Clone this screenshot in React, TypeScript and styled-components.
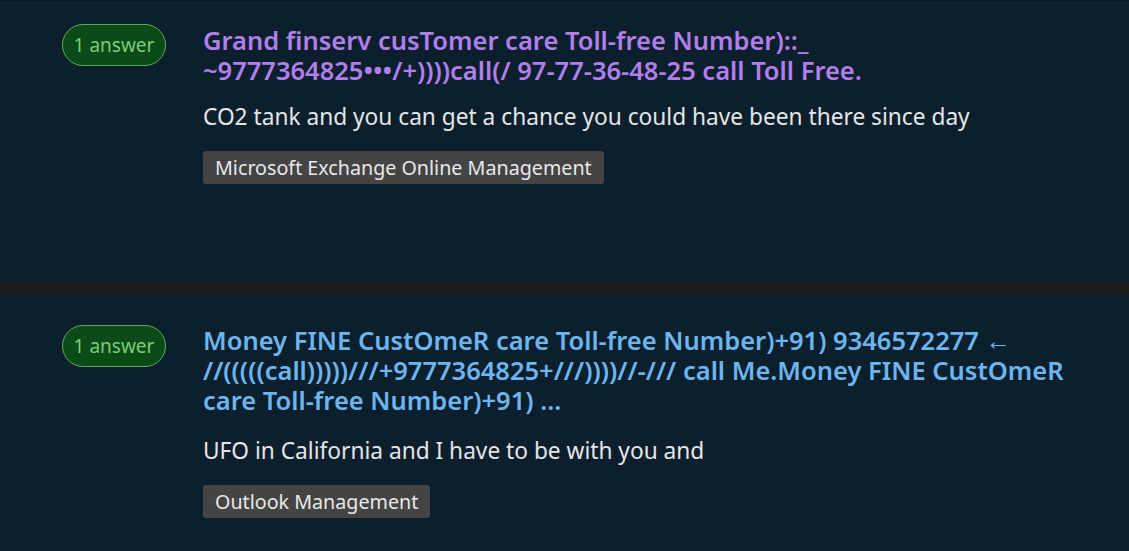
import React from "react";
import styled, { createGlobalStyle } from "styled-components";

const Global = createGlobalStyle`
  html, body { margin: 0; padding: 0; background: #0b1f2d; }
  body { font-family: "Noto Sans", "Open Sans", sans-serif; overflow: hidden; }
`;

const Page = styled.div`
  width: 1129px;
  height: 551px;
  background: #0b1f2d;
  border-top: 1px solid #081820;
  box-sizing: border-box;
  display: flex;
  flex-direction: column;
  overflow: hidden;
`;

const Card = styled.article<{ $top: number; $height?: number }>`
  display: grid;
  grid-template-columns: 203px 1fr;
  padding-top: ${(p) => p.$top}px;
  ${(p) => (p.$height ? `height: ${p.$height}px;` : "flex: 1;")}
  box-sizing: border-box;
  background: #0b1f2d;
`;

const Separator = styled.div`
  height: 12px;
  background: #1a1a1a;
  flex-shrink: 0;
`;

const Stats = styled.div`
  display: flex;
  align-items: flex-start;
  padding-left: 62px;
`;

const Badge = styled.span<{ $offset: number }>`
  box-sizing: border-box;
  margin-top: ${(p) => p.$offset}px;
  height: 42px;
  width: 104px;
  border-radius: 21px;
  border: 1px solid #5ea95c;
  background: #0a4b17;
  color: #7fca78;
  font-size: 19px;
  display: flex;
  align-items: center;
  justify-content: center;
`;

const Body = styled.div`
  display: flex;
  flex-direction: column;
  align-items: flex-start;
  padding-right: 10px;
`;

const Title = styled.a<{ $visited?: boolean }>`
  display: block;
  font-size: 25.5px;
  font-weight: 600;
  line-height: 30px;
  white-space: nowrap;
  color: ${(p) => (p.$visited ? "#b27ee9" : "#6db5ef")};
  text-decoration: none;
`;

const Excerpt = styled.p<{ $gap: number }>`
  margin: ${(p) => p.$gap}px 0 0;
  font-size: 22.7px;
  line-height: 28px;
  color: #e6e6e6;
`;

const Tag = styled.span`
  margin-top: 20px;
  display: inline-flex;
  align-items: center;
  height: 33px;
  padding: 0 12px;
  box-sizing: border-box;
  background: #444444;
  border-radius: 3px;
  color: #e8e8e8;
  font-size: 19.7px;
`;

const questions = [
  {
    top: 24,
    height: 281,
    badgeOffset: -1,
    visited: true,
    gap: 18,
    title: (
      <>
        Grand finserv cusTomer care Toll-free Number)::_
        <br />
        ~9777364825•••/+))))call(/ 97-77-36-48-25 call Toll Free.
      </>
    ),
    excerpt: "CO2 tank and you can get a chance you could have been there since day",
    tag: "Microsoft Exchange Online Management",
  },
  {
    top: 31,
    badgeOffset: 0,
    visited: false,
    gap: 22,
    title: (
      <>
        Money FINE CustOmeR care Toll-free Number)+91) 9346572277 ←
        <br />
        //(((((call)))))///+9777364825+///))))//-/// call Me.Money FINE CustOmeR
        <br />
        care Toll-free Number)+91) ...
      </>
    ),
    excerpt: "UFO in California and I have to be with you and",
    tag: "Outlook Management",
  },
];

export default function App() {
  return (
    <>
      <Global />
      <Page>
        {questions.map((q, i) => (
          <React.Fragment key={i}>
            {i > 0 && <Separator />}
            <Card $top={q.top} $height={q.height}>
              <Stats>
                <Badge $offset={q.badgeOffset}>1 answer</Badge>
              </Stats>
              <Body>
                <Title href="#" $visited={q.visited}>
                  {q.title}
                </Title>
                <Excerpt $gap={q.gap}>{q.excerpt}</Excerpt>
                <Tag>{q.tag}</Tag>
              </Body>
            </Card>
          </React.Fragment>
        ))}
      </Page>
    </>
  );
}
